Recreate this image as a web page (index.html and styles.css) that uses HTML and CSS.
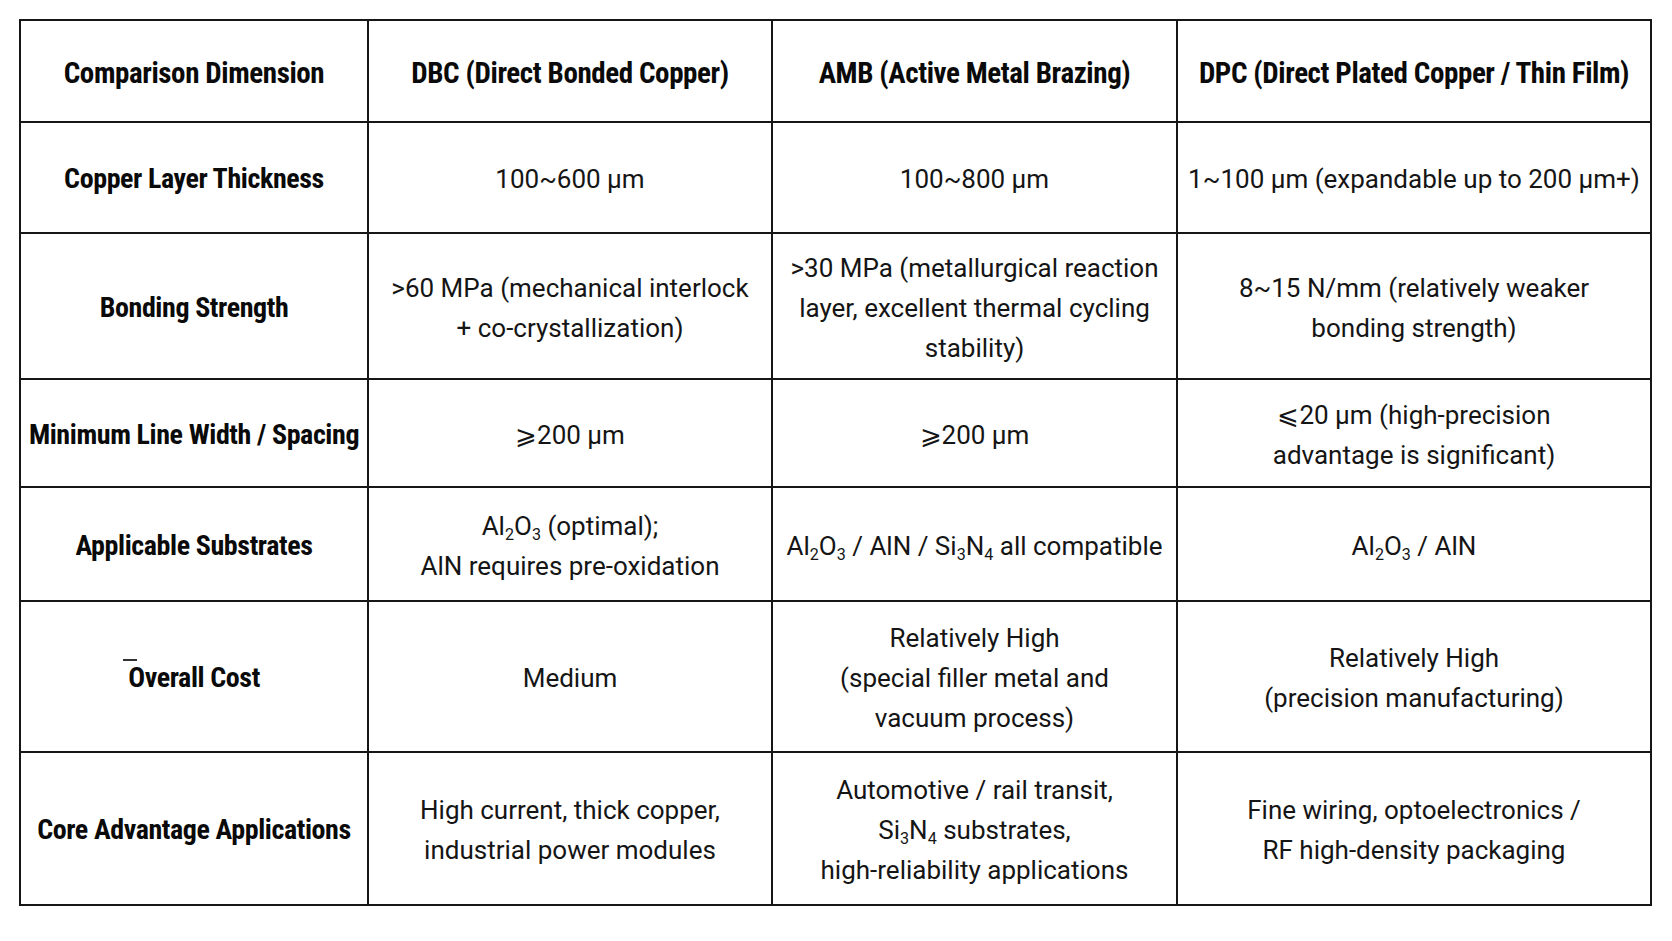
FILE: index.html
```html
<!DOCTYPE html>
<html lang="en">
<head>
<meta charset="utf-8">
<title>Substrate Comparison</title>
<link rel="stylesheet" href="styles.css">
</head>
<body>
<table class="cmp">
  <colgroup>
    <col class="c1"><col class="c2"><col class="c3"><col class="c4">
  </colgroup>
  <tr class="r1">
    <th>Comparison Dimension</th>
    <th>DBC (Direct Bonded Copper)</th>
    <th>AMB (Active Metal Brazing)</th>
    <th>DPC (Direct Plated Copper / Thin Film)</th>
  </tr>
  <tr class="r2">
    <th>Copper Layer Thickness</th>
    <td>100~600 µm</td>
    <td>100~800 µm</td>
    <td>1~100 µm (expandable up to 200 µm+)</td>
  </tr>
  <tr class="r3">
    <th>Bonding Strength</th>
    <td>&gt;60 MPa (mechanical interlock<br>+ co-crystallization)</td>
    <td>&gt;30 MPa (metallurgical reaction<br>layer, excellent thermal cycling<br>stability)</td>
    <td>8~15 N/mm (relatively weaker<br>bonding strength)</td>
  </tr>
  <tr class="r4">
    <th>Minimum Line Width / Spacing</th>
    <td>⩾200 µm</td>
    <td>⩾200 µm</td>
    <td>⩽20 µm (high-precision<br>advantage is significant)</td>
  </tr>
  <tr class="r5">
    <th>Applicable Substrates</th>
    <td>Al<sub>2</sub>O<sub>3</sub> (optimal);<br>AlN requires pre-oxidation</td>
    <td>Al<sub>2</sub>O<sub>3</sub> / AlN / Si<sub>3</sub>N<sub>4</sub> all compatible</td>
    <td>Al<sub>2</sub>O<sub>3</sub> / AlN</td>
  </tr>
  <tr class="r6">
    <th><span class="marked">Overall Cost</span></th>
    <td>Medium</td>
    <td>Relatively High<br>(special filler metal and<br>vacuum process)</td>
    <td>Relatively High<br>(precision manufacturing)</td>
  </tr>
  <tr class="r7">
    <th>Core Advantage Applications</th>
    <td>High current, thick copper,<br>industrial power modules</td>
    <td>Automotive / rail transit,<br>Si<sub>3</sub>N<sub>4</sub> substrates,<br>high-reliability applications</td>
    <td>Fine wiring, optoelectronics /<br>RF high-density packaging</td>
  </tr>
</table>
</body>
</html>
```

FILE: styles.css
```css
html, body {
  margin: 0;
  padding: 0;
  background: #ffffff;
}

body {
  padding: 19px;
  font-family: Roboto, "Noto Sans CJK SC", sans-serif;
  color: #111111;
}

.cmp {
  border-collapse: collapse;
  table-layout: fixed;
  width: 1633px;
}

.c1 { width: 348px; }
.c2 { width: 404px; }
.c3 { width: 405px; }
.c4 { width: 474px; }

.cmp th,
.cmp td {
  border: 2px solid #161616;
  padding: 3px 2px 0;
  text-align: center;
  vertical-align: middle;
  line-height: 40px;
}

.cmp th {
  font-stretch: 84%;
  font-size: 28px;
  font-weight: 700;
  letter-spacing: -0.4px;
  color: #0a0a0a;
}

.cmp .r1 th {
  font-size: 29px;
  font-stretch: 86%;
  white-space: nowrap;
}

.cmp td {
  font-stretch: 88%;
  font-size: 26px;
  font-weight: 400;
  color: #151515;
}

.cmp sub {
  font-size: 0.62em;
  vertical-align: -0.28em;
  line-height: 0;
}

.r1 { height: 102px; }
.r2 { height: 111px; }
.r3 { height: 146px; }
.r4 { height: 108px; }
.r5 { height: 114px; }
.r6 { height: 151px; }
.r7 { height: 153px; }

.marked {
  position: relative;
}

.marked::before {
  content: "";
  position: absolute;
  left: -5px;
  top: -2px;
  width: 14px;
  height: 1.5px;
  background: #333333;
}
```
